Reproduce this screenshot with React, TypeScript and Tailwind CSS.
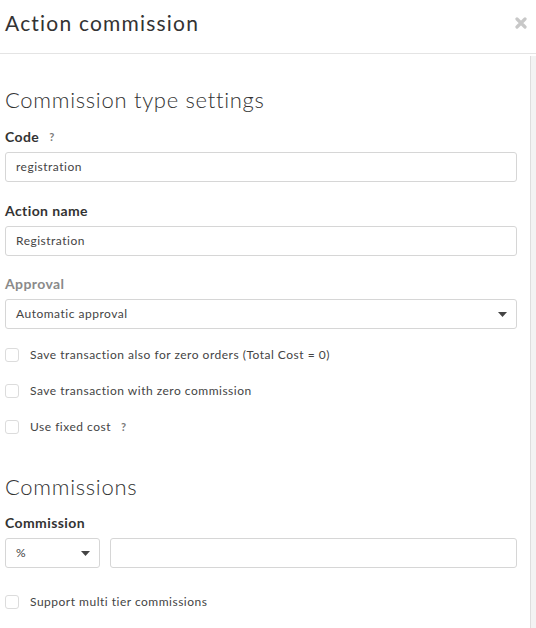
import React from "react";

const font = { fontFamily: "Lato, 'Open Sans', sans-serif" };

function Help() {
    return <span className="ml-[10px] text-[11px] font-bold text-[#7a7a7a]">?</span>;
}

function Caret() {
    return (
        <svg width="9" height="5" viewBox="0 0 9 5" className="shrink-0">
            <path d="M0 0h9L4.5 5z" fill="#444" />
        </svg>
    );
}

function Label({ children, muted }: { children: React.ReactNode; muted?: boolean }) {
    return (
        <div className={`flex items-center text-[14px] leading-[18px] font-bold tracking-[0.4px] ${muted ? "text-[#8a8a8a]" : "text-[#333]"}`}>
            {children}
        </div>
    );
}

function Field({ value, className = "" }: { value: string; className?: string }) {
    return (
        <div className={`h-[30px] flex items-center px-[10px] border border-[#d6d6d6] rounded-[3px] text-[12px] tracking-[0.5px] text-[#444] ${className}`}>
            {value}
        </div>
    );
}

function Select({ value, className = "" }: { value: string; className?: string }) {
    return (
        <div className={`h-[30px] flex items-center justify-between pl-[10px] pr-[9px] border border-[#d6d6d6] rounded-[3px] text-[12px] tracking-[0.5px] text-[#444] ${className}`}>
            <span>{value}</span>
            <Caret />
        </div>
    );
}

function Check({ children }: { children: React.ReactNode }) {
    return (
        <div className="h-[36px] flex items-center text-[12px] tracking-[0.5px] text-[#444]">
            <span className="w-[14px] h-[14px] border border-[#dcdcdc] rounded-[3px] mr-[11px]" />
            {children}
        </div>
    );
}

export default function App() {
    return (
        <div className="w-[536px] h-[628px] bg-white overflow-hidden flex flex-col" style={font}>
            <div className="h-[54px] shrink-0 border-b border-[#e4e4e4] flex items-start justify-between pl-[5px] pr-[9px]">
                <h1 className="pt-[9px] text-[21px] leading-[28px] tracking-[1.2px] text-[#333]">Action commission</h1>
                <svg width="12" height="12" viewBox="0 0 12 12" className="mt-[17px]">
                    <path d="M2 2L10 10M10 2L2 10" stroke="#c8c8c8" strokeWidth="3.2" strokeLinecap="round" />
                </svg>
            </div>
            <div className="flex flex-1">
                <div className="flex-1 pl-[5px] pr-[13px]">
                    <h2 className="mt-[31px] text-[22px] leading-[30px] font-light tracking-[0.7px] text-[#333]">Commission type settings</h2>

                    <div className="mt-[13px]">
                        <Label>Code <Help /></Label>
                    </div>
                    <Field value="registration" className="mt-[6px]" />

                    <div className="mt-[20px]">
                        <Label>Action name</Label>
                    </div>
                    <Field value="Registration" className="mt-[6px]" />

                    <div className="mt-[19px]">
                        <Label muted>Approval</Label>
                    </div>
                    <Select value="Automatic approval" className="mt-[6px]" />

                    <div className="mt-[8px]">
                        <Check>Save transaction also for zero orders (Total Cost = 0)</Check>
                        <Check>Save transaction with zero commission</Check>
                        <Check>
                            Use fixed cost <Help />
                        </Check>
                    </div>

                    <h2 className="mt-[27px] text-[22px] leading-[30px] font-light tracking-[0.7px] text-[#333]">Commissions</h2>

                    <div className="mt-[12px]">
                        <Label>Commission</Label>
                    </div>
                    <div className="mt-[6px] flex gap-[10px]">
                        <Select value="%" className="w-[95px]" />
                        <Field value="" className="flex-1" />
                    </div>

                    <div className="mt-[16px]">
                        <Check>Support multi tier commissions</Check>
                    </div>
                </div>
                <div className="w-[6px] mt-[2px] border-l border-[#dedede] bg-[#f3f3f3]" />
            </div>
        </div>
    );
}
